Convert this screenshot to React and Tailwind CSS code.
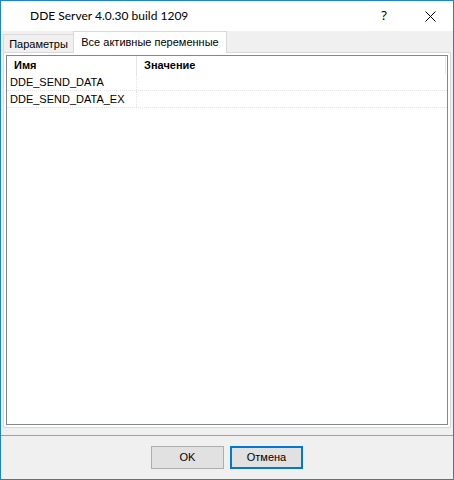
import React from "react";

const rows = ["DDE_SEND_DATA", "DDE_SEND_DATA_EX"];

function CloseIcon() {
  return (
    <svg width="11" height="11" viewBox="0 0 11 11" aria-hidden="true">
      <path d="M0.5 0.5 L10.5 10.5 M10.5 0.5 L0.5 10.5" stroke="#000" strokeWidth="1" fill="none" />
    </svg>
  );
}

export default function App() {
  return (
    <div
      className="flex h-[480px] w-[454px] flex-col border border-[#1883d7] bg-white text-black"
      style={{ fontFamily: '"Liberation Sans", Arial, sans-serif' }}
    >
      {/* title bar */}
      <div className="flex h-[30px] shrink-0 items-center bg-white">
        <div className="pl-[29px] text-[12px] text-black" style={{ fontFamily: 'Lato, "Noto Sans", sans-serif' }}>
          DDE Server 4.0.30 build 1209
        </div>
        <div className="ml-auto flex h-full">
          <div className="flex h-full w-[46px] items-center justify-center text-[13px]" style={{ fontFamily: '"Noto Sans", sans-serif' }}>
            ?
          </div>
          <div className="flex h-full w-[46px] items-center justify-center">
            <CloseIcon />
          </div>
        </div>
      </div>

      {/* body */}
      <div className="flex flex-1 flex-col bg-[#f0f0f0] text-[11px]">
        {/* tabs */}
        <div className="flex h-[21px] shrink-0 items-end pl-[2px]">
          <div className="flex h-[18px] w-[70px] items-center justify-center border border-b-0 border-r-0 border-[#d9d9d9] bg-[#f0f0f0] pt-[1px]">
            Параметры
          </div>
          <div className="relative z-10 -mb-px flex h-[22px] w-[154px] items-center justify-center border border-b-0 border-[#d9d9d9] bg-white">
            Все активные переменные
          </div>
        </div>

        {/* panel */}
        <div className="mx-[2px] flex h-[376px] shrink-0 flex-col border border-[#d9d9d9] bg-white p-[2px]">
          <div className="flex-1 border border-[#828790] bg-white">
            <div className="flex h-[18px] items-center font-bold">
              <div className="flex h-full w-[130px] items-center border-r border-[#e5e5e5] pl-[7px]">Имя</div>
              <div className="flex h-full w-[309px] items-center border-r border-[#e5e5e5] pl-[7px]">Значение</div>
            </div>
            {rows.map((r) => (
              <div key={r} className="flex h-[17px] items-center border-b border-dotted border-[#e3e3e3]">
                <div className="flex h-full w-[130px] items-center border-r border-dotted border-[#e3e3e3] pl-[3px]">{r}</div>
                <div className="h-full flex-1" />
              </div>
            ))}
          </div>
        </div>

        <div className="h-[7px] shrink-0" />
        <div className="h-px shrink-0 bg-[#a0a0a0]" />

        {/* buttons */}
        <div className="flex flex-1 items-center justify-center gap-[6px]">
          <button className="h-[23px] w-[73px] border border-[#adadad] bg-[#e1e1e1] text-[11px]">OK</button>
          <button className="h-[23px] w-[73px] border-2 border-[#0078d7] bg-[#e1e1e1] text-[11px]">Отмена</button>
        </div>
      </div>
    </div>
  );
}
